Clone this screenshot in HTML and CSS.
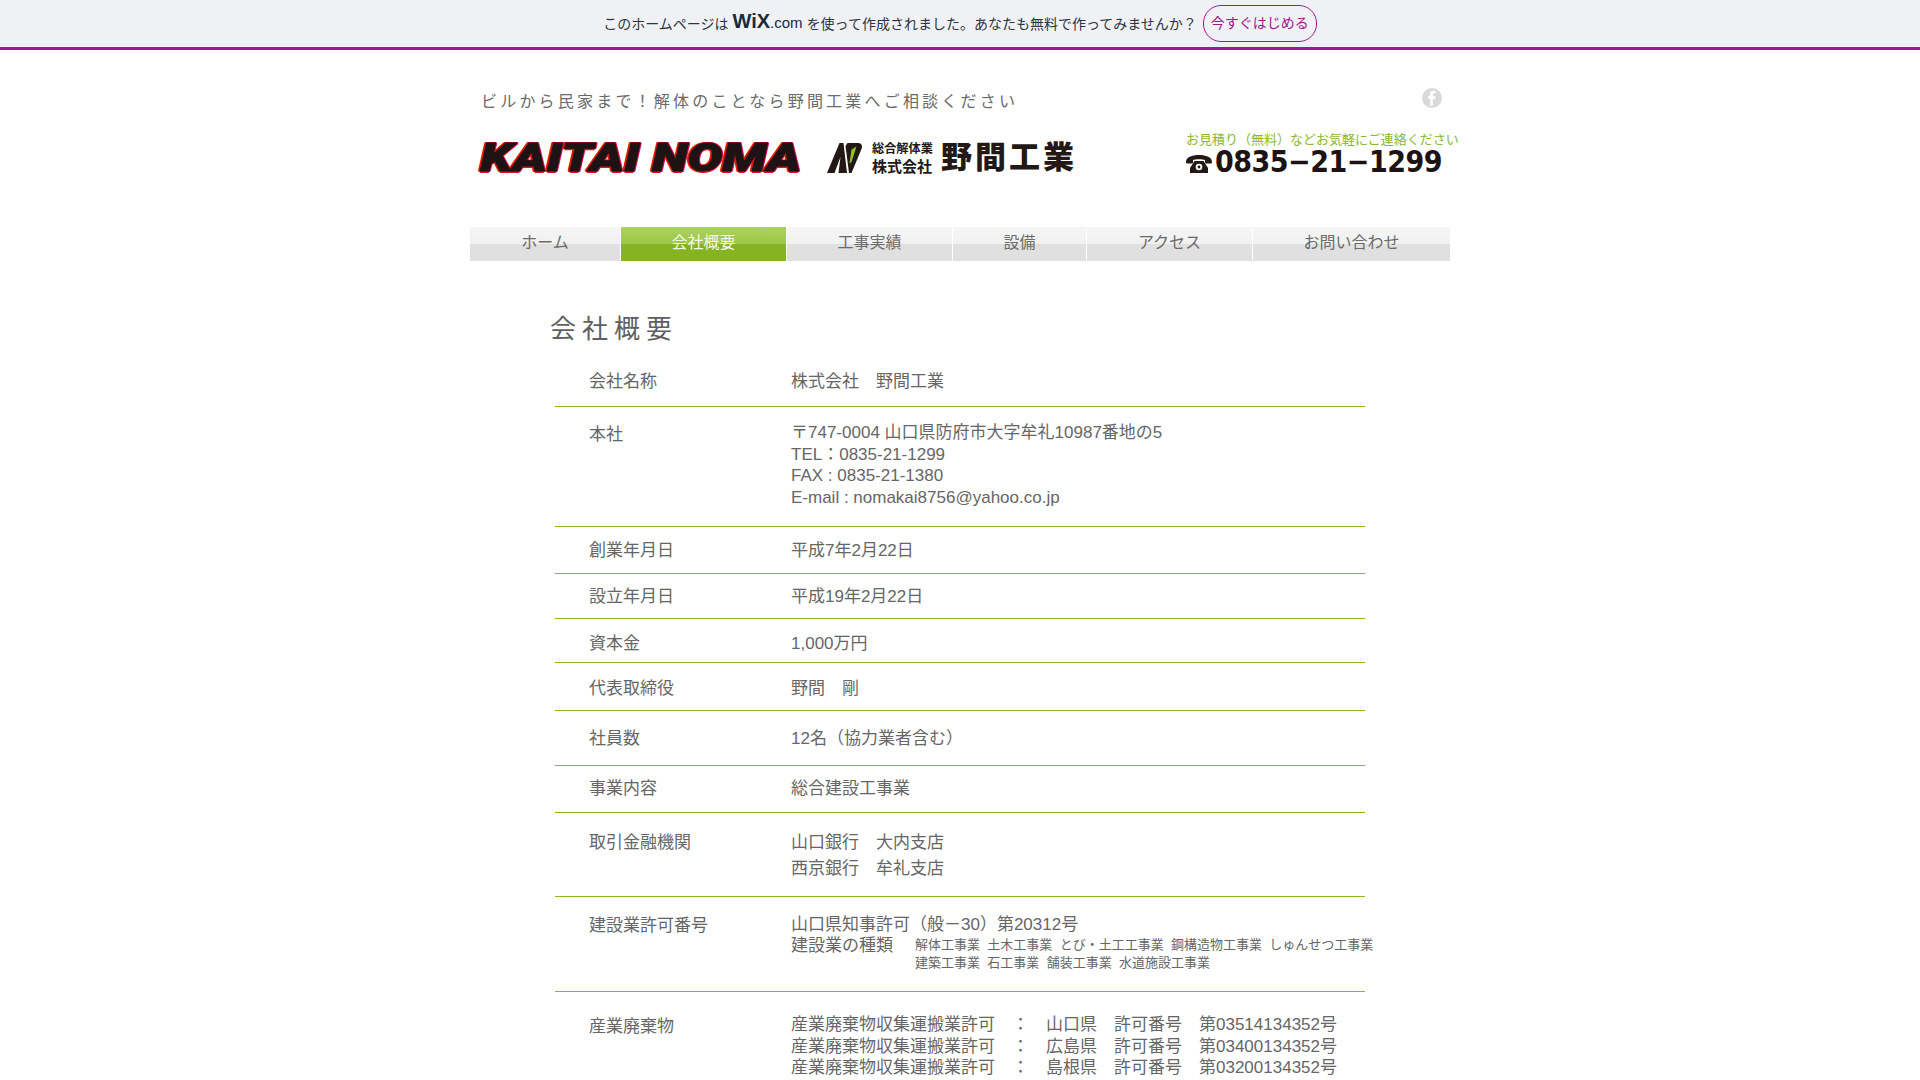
FILE: index.html
```html
<!DOCTYPE html>
<html lang="ja">

<head>
    <meta charset="UTF-8">
    <title>会社概要 | 野間工業</title>
    <link rel="stylesheet" href="styles.css">
</head>

<body>
    <div class="wix-bar">
        <span>このホームページは</span>
        <span class="wix-logo">WiX<small>.com</small></span>
        <span>を使って作成されました。あなたも無料で作ってみませんか？</span>
        <a class="wix-btn" href="#">今すぐはじめる</a>
    </div>

    <div class="wrap">
        <div class="head-top">
            <p class="tagline">ビルから民家まで！解体のことなら野間工業へご相談ください</p>
            <svg class="fb" viewBox="0 0 20 20">
                <circle cx="10" cy="10" r="10" fill="#d9d9d9" />
                <path d="M10.8 18v-7h2.3l.4-2.7h-2.7V6.6c0-.8.3-1.3 1.3-1.3h1.5V2.9c-.3 0-1.1-.1-2.1-.1-2.1 0-3.5 1.3-3.5 3.6v1.9H6v2.7h2.3V18z" fill="#fff" />
            </svg>
        </div>

        <div class="head-logo">
            <div class="kaitai">KAITAI NOMA</div>
            <svg class="mark" viewBox="0 0 35 30">
                <path d="M0 30 12.5 0H16.5L20 30H11.5L13.5 14 7.5 30Z" fill="#231815" />
                <path d="M20.5 0H31C35 0 35.5 3 34.5 6L24.5 30H22L18.5 3Z" fill="#231815" />
                <path d="M24.5 6.5 29.5 3.5 24.5 19 22.5 20.5Z" fill="#8fc31f" />
            </svg>
            <div class="company">
                <span class="company-type">総合解体業</span>
                <span class="company-kind">株式会社</span>
            </div>
            <div class="company-name">野間工業</div>
            <div class="tel">
                <p class="tel-note">お見積り（無料）などお気軽にご連絡ください</p>
                <div class="tel-num">
                    <svg class="tel-icon" viewBox="0 0 26 18">
                        <path d="M0 7C0 2 6 0 13 0s13 2 13 7c0 1-.5 1.5-1.5 1.5h-4c-1 0-1.5-.5-1.5-1.5V5c-2-1-10-1-12 0v2c0 1-.5 1.5-1.5 1.5h-4C.5 8.5 0 8 0 7Z" fill="#231815" />
                        <path d="M8.5 6h9L22 13v5H4v-5Z" fill="#231815" />
                        <circle cx="13" cy="12" r="3.3" fill="#fff" />
                        <circle cx="13" cy="12" r="1.4" fill="#231815" />
                    </svg>
                    <span>0835−21−1299</span>
                </div>
            </div>
        </div>

        <ul class="nav">
            <li>ホーム</li>
            <li class="active">会社概要</li>
            <li>工事実績</li>
            <li>設備</li>
            <li>アクセス</li>
            <li>お問い合わせ</li>
        </ul>

        <h1 class="title">会社概要</h1>

        <div class="info">
            <div class="row">
                <div class="label">会社名称</div>
                <div class="val">株式会社　野間工業</div>
            </div>
            <div class="row">
                <div class="label">本社</div>
                <div class="val">
                    〒747-0004 山口県防府市大字牟礼10987番地の5<br>
                    TEL：0835-21-1299<br>
                    FAX : 0835-21-1380<br>
                    E-mail : nomakai8756@yahoo.co.jp
                </div>
            </div>
            <div class="row">
                <div class="label">創業年月日</div>
                <div class="val">平成7年2月22日</div>
            </div>
            <div class="row">
                <div class="label">設立年月日</div>
                <div class="val">平成19年2月22日</div>
            </div>
            <div class="row">
                <div class="label">資本金</div>
                <div class="val">1,000万円</div>
            </div>
            <div class="row">
                <div class="label">代表取締役</div>
                <div class="val">野間　剛</div>
            </div>
            <div class="row">
                <div class="label">社員数</div>
                <div class="val">12名（協力業者含む）</div>
            </div>
            <div class="row">
                <div class="label">事業内容</div>
                <div class="val">総合建設工事業</div>
            </div>
            <div class="row">
                <div class="label">取引金融機関</div>
                <div class="val">山口銀行　大内支店<br>西京銀行　牟礼支店</div>
            </div>
            <div class="row">
                <div class="label">建設業許可番号</div>
                <div class="val">
                    山口県知事許可（般－30）第20312号
                    <div class="kinds">
                        <span class="kinds-name">建設業の種類</span>
                        <div class="kinds-list">
                            <span>解体工事業</span><span>土木工事業</span><span>とび・土工工事業</span><span>鋼構造物工事業</span><span>しゅんせつ工事業</span>
                            <br>
                            <span>建築工事業</span><span>石工事業</span><span>舗装工事業</span><span>水道施設工事業</span>
                        </div>
                    </div>
                </div>
            </div>
            <div class="row">
                <div class="label">産業廃棄物</div>
                <div class="val">
                    産業廃棄物収集運搬業許可　：　山口県　許可番号　第03514134352号<br>
                    産業廃棄物収集運搬業許可　：　広島県　許可番号　第03400134352号<br>
                    産業廃棄物収集運搬業許可　：　島根県　許可番号　第03200134352号
                </div>
            </div>
        </div>
    </div>
</body>

</html>
```

FILE: styles.css
```css
* {
    margin: 0;
    padding: 0;
    list-style: none;
    text-decoration: none;
    box-sizing: border-box;
}

html,
body {
    height: 1080px;
    overflow: hidden;
}

body {
    background: #fff;
    color: #666;
    font-family: "Liberation Sans", "Noto Sans CJK JP", sans-serif;
}

/* top banner */
.wix-bar {
    display: flex;
    justify-content: center;
    align-items: center;
    height: 50px;
    padding-bottom: 1px;
    background: #eff1f4;
    border-bottom: 3px solid #a3158e;
    color: #2b3440;
    font-size: 14px;
}

.wix-logo {
    margin: 0 4px 3px 4px;
    color: #1c2a3a;
    font-size: 20px;
    font-weight: bold;
}

.wix-logo small {
    font-size: 15px;
    font-weight: normal;
}

.wix-btn {
    display: block;
    width: 114px;
    height: 37px;
    margin-left: 6px;
    border: 1px solid #a3158e;
    border-radius: 18px;
    color: #a3158e;
    line-height: 35px;
    text-align: center;
}

.wrap {
    width: 980px;
    margin: 0 auto;
}

/* header */
.head-top {
    display: flex;
    justify-content: space-between;
    align-items: center;
    height: 24px;
    margin-top: 38px;
    padding: 0 8px 0 11px;
}

.tagline {
    color: #6b6b6b;
    font-size: 16px;
    letter-spacing: 3.2px;
}

.fb {
    width: 20px;
    height: 20px;
    margin-top: -4px;
}

.head-logo {
    display: flex;
    align-items: flex-start;
    height: 66px;
    margin-top: 28px;
    padding-left: 10px;
}

.head-logo > * {
    flex-shrink: 0;
}

.kaitai {
    width: 322px;
    margin-top: 1px;
    color: #1d1315;
    font-family: Roboto, "Liberation Sans", sans-serif;
    font-size: 39px;
    font-style: italic;
    font-weight: 900;
    line-height: 34px;
    white-space: nowrap;
    -webkit-text-stroke: 1px #1d1315;
    text-shadow: 1.5px 0 #e0121d, -1.5px 0 #e0121d, 0 1.5px #e0121d, 0 -1.5px #e0121d,
        1.2px 1.2px #e0121d, -1.2px 1.2px #e0121d, 1.2px -1.2px #e0121d, -1.2px -1.2px #e0121d;
    transform: scaleX(1.33);
    transform-origin: left center;
}

.mark {
    width: 35px;
    height: 30px;
    margin: 3px 0 0 25px;
}

.company {
    display: flex;
    flex-direction: column;
    width: 61px;
    margin: 2px 0 0 10px;
    color: #231815;
    font-weight: bold;
    white-space: nowrap;
}

.company-type {
    font-size: 12.2px;
    line-height: 15px;
}

.company-kind {
    margin-top: 1px;
    font-size: 15px;
    line-height: 17px;
}

.company-name {
    margin: 1px 0 0 8px;
    color: #231815;
    font-size: 31px;
    font-weight: 900;
    letter-spacing: 3px;
    line-height: 34px;
    white-space: nowrap;
}

.tel {
    margin: -9px 0 0 109px;
}

.tel-note {
    color: #8ab92d;
    font-size: 13px;
    line-height: 18px;
    white-space: nowrap;
}

.tel-num {
    display: flex;
    align-items: center;
    gap: 3px;
    margin-top: -1px;
    color: #1d1315;
    font-family: "DejaVu Sans Condensed", "DejaVu Sans", sans-serif;
    font-size: 30px;
    font-weight: bold;
    letter-spacing: -0.5px;
    line-height: 27px;
    white-space: nowrap;
}

.tel-icon {
    width: 26px;
    height: 18px;
    margin-top: 5px;
}

/* nav */
.nav {
    display: flex;
    gap: 1px;
    height: 34px;
    margin-top: 21px;
}

.nav li {
    width: 165px;
    background: linear-gradient(#f5f5f5 0, #f1f1f1 50%, #e0e0e0 50%, #e0e0e0 100%);
    color: #6b6b6b;
    font-size: 16px;
    line-height: 32px;
    text-align: center;
}

.nav li:nth-child(1) {
    width: 150px;
}

.nav li:nth-child(4) {
    width: 133px;
}

.nav li:nth-child(6) {
    width: 197px;
}

.nav li.active {
    background: linear-gradient(#acd25e 0, #9dc747 50%, #85b322 50%, #85b322 100%);
    color: #f4f8e6;
}

/* company info */
.title {
    margin: 52px 0 0 80px;
    color: #5f5f5f;
    font-size: 26px;
    font-weight: normal;
    letter-spacing: 6px;
    line-height: 32px;
}

.info {
    width: 810px;
    margin: 16px 0 0 85px;
}

.row {
    display: grid;
    grid-template-columns: 236px 1fr;
    border-bottom: 1px solid #8ab922;
    font-size: 17px;
    line-height: 22px;
}

.label {
    padding-left: 34px;
}

.val {
    white-space: nowrap;
}

.row:nth-child(1) { padding: 10px 0 13px; }
.row:nth-child(2) { padding: 15px 0 18px; }
.row:nth-child(3) { padding: 13px 0 11px; }
.row:nth-child(4) { padding: 12px 0 10px; }
.row:nth-child(5) { padding: 14px 0 7px; }
.row:nth-child(6) { padding: 15px 0 10px; }
.row:nth-child(7) { padding: 17px 0 15px; }
.row:nth-child(8) { padding: 12px 0 12px; }
.row:nth-child(9) { padding: 17px 0 14px; }
.row:nth-child(10) { padding: 17px 0 0; height: 95px; }

.row:nth-child(2) .label,
.row:nth-child(9) .label,
.row:nth-child(11) .label {
    margin-top: 2px;
}

.row:nth-child(10) .label {
    margin-top: 1px;
}

.row:nth-child(11) {
    padding-top: 22px;
    border-bottom: 0;
}

.row:nth-child(2) .val,
.row:nth-child(11) .val {
    line-height: 21.5px;
}

.row:nth-child(9) .val {
    line-height: 26px;
}

.row:nth-child(10) .val {
    line-height: 21px;
}

.kinds {
    display: flex;
}

.kinds-name {
    width: 124px;
}

.kinds-list {
    margin-top: 1px;
    font-size: 13px;
    line-height: 18px;
}

.kinds-list span {
    margin-right: 7.3px;
}
```
